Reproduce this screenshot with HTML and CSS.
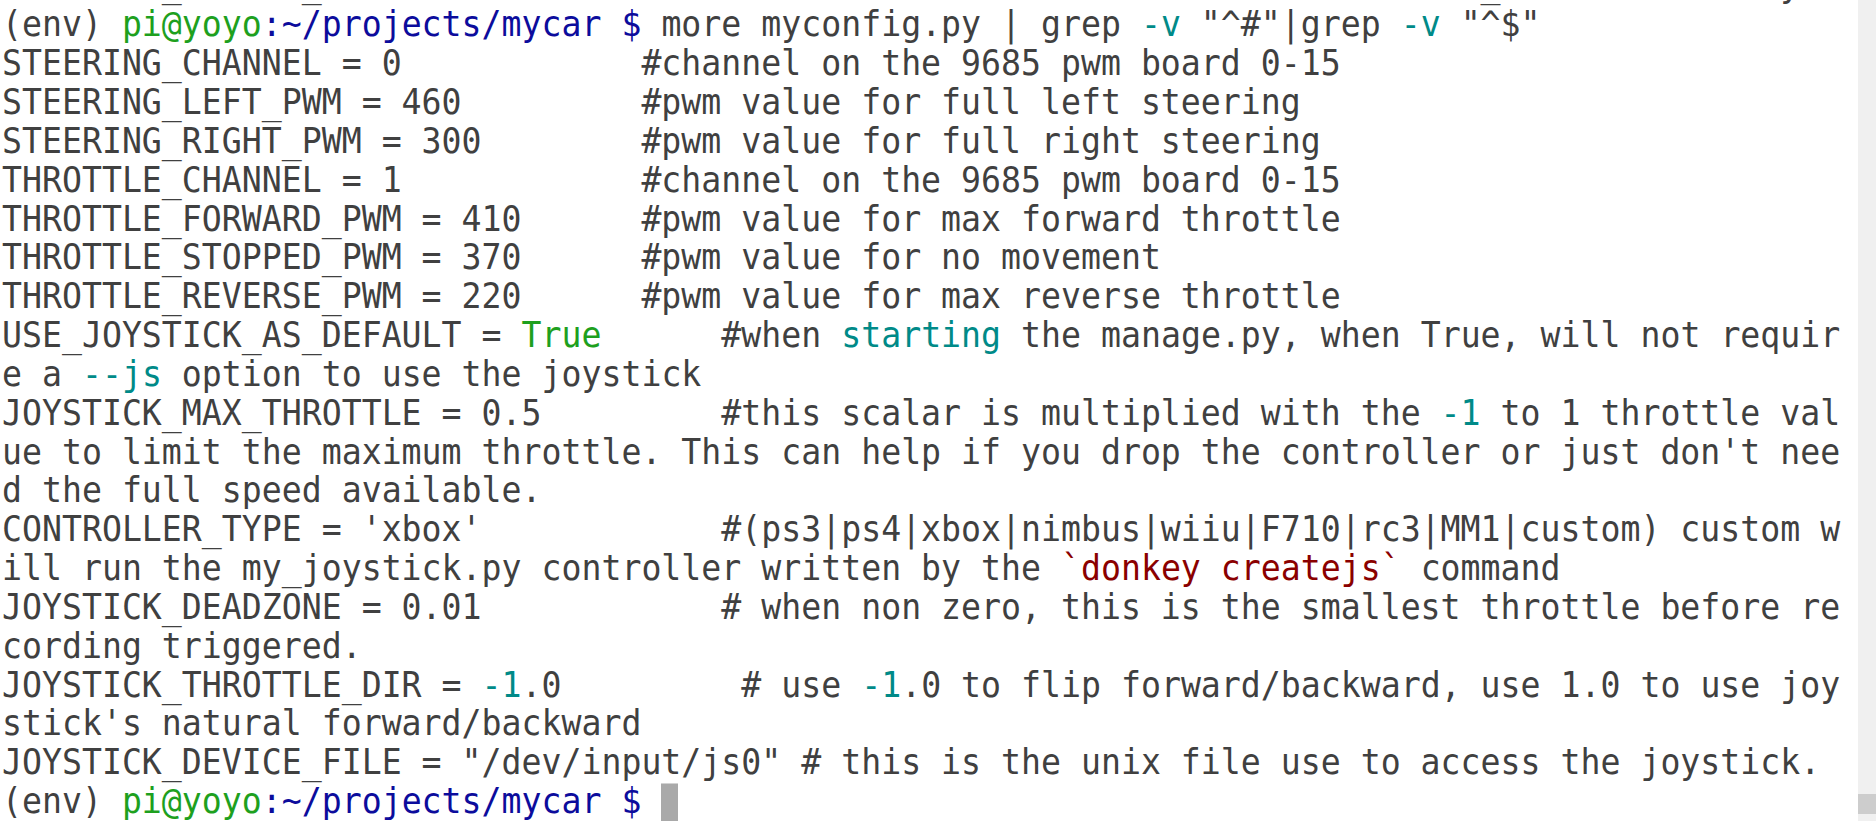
FILE: index.html
```html
<!DOCTYPE html>
<html>
<head>
<meta charset="utf-8">
<link rel="stylesheet" href="styles.css">
</head>
<body>
<div class="window">
  <div class="terminal">
    <div class="screen">
      <div class="line">        _      _                                                          _              y</div>
      <div class="line">(env) <span class="g">pi@yoyo</span><span class="b">:~/projects/mycar $</span> more myconfig.py | grep <span class="t">-v</span> "^#"|grep <span class="t">-v</span> "^$"</div>
      <div class="line">STEERING_CHANNEL = 0            #channel on the 9685 pwm board 0-15</div>
      <div class="line">STEERING_LEFT_PWM = 460         #pwm value for full left steering</div>
      <div class="line">STEERING_RIGHT_PWM = 300        #pwm value for full right steering</div>
      <div class="line">THROTTLE_CHANNEL = 1            #channel on the 9685 pwm board 0-15</div>
      <div class="line">THROTTLE_FORWARD_PWM = 410      #pwm value for max forward throttle</div>
      <div class="line">THROTTLE_STOPPED_PWM = 370      #pwm value for no movement</div>
      <div class="line">THROTTLE_REVERSE_PWM = 220      #pwm value for max reverse throttle</div>
      <div class="line">USE_JOYSTICK_AS_DEFAULT = <span class="g">True</span>      #when <span class="t">starting</span> the manage.py, when True, will not requir</div>
      <div class="line">e a <span class="t">--js</span> option to use the joystick</div>
      <div class="line">JOYSTICK_MAX_THROTTLE = 0.5         #this scalar is multiplied with the <span class="t">-1</span> to 1 throttle val</div>
      <div class="line">ue to limit the maximum throttle. This can help if you drop the controller or just don't nee</div>
      <div class="line">d the full speed available.</div>
      <div class="line">CONTROLLER_TYPE = 'xbox'            #(ps3|ps4|xbox|nimbus|wiiu|F710|rc3|MM1|custom) custom w</div>
      <div class="line">ill run the my_joystick.py controller written by the <span class="r">`donkey createjs`</span> command</div>
      <div class="line">JOYSTICK_DEADZONE = 0.01            # when non zero, this is the smallest throttle before re</div>
      <div class="line">cording triggered.</div>
      <div class="line">JOYSTICK_THROTTLE_DIR = <span class="t">-1</span>.0         # use <span class="t">-1</span>.0 to flip forward/backward, use 1.0 to use joy</div>
      <div class="line">stick's natural forward/backward</div>
      <div class="line">JOYSTICK_DEVICE_FILE = "/dev/input/js0" # this is the unix file use to access the joystick.</div>
      <div class="line">(env) <span class="g">pi@yoyo</span><span class="b">:~/projects/mycar $</span> <span class="cursor"></span></div>
    </div>
  </div>
  <div class="scrollbar">
    <div class="thumb"></div>
  </div>
</div>
</body>
</html>
```

FILE: styles.css
```css
html, body {
  margin: 0;
  padding: 0;
  background: #ffffff;
}

.window {
  display: flex;
  width: 1876px;
  height: 821px;
  overflow: hidden;
}

.terminal {
  flex: 1;
  display: flex;
  flex-direction: column;
  justify-content: flex-end;
  overflow: hidden;
  background: #ffffff;
  padding-left: 2px;
}

.screen {
  font-family: "DejaVu Sans Mono", monospace;
  font-size: 33.2px;
  line-height: 38.85px;
  color: #404040;
}

.line {
  white-space: pre;
  height: 38.85px;
  transform: scaleY(1.08);
  transform-origin: 0 22px;
}

.g { color: #1ea01e; }
.b { color: #0c0c9c; }
.t { color: #008a88; }
.r { color: #8a0000; }

.cursor {
  display: inline-block;
  width: 17px;
  height: 35px;
  background: #a9a9a9;
  vertical-align: -8px;
}

.scrollbar {
  width: 18px;
  flex: none;
  background: #f0f0f0;
  display: flex;
  flex-direction: column;
  justify-content: flex-end;
  padding-bottom: 7px;
  box-sizing: border-box;
}

.thumb {
  height: 20px;
  background: #cdcdcd;
}
```
